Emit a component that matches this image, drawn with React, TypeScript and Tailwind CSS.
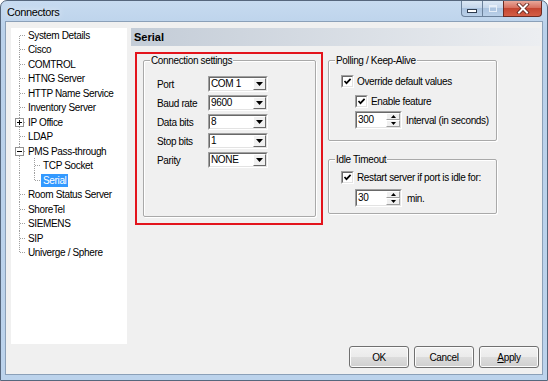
import React from "react";

type TreeItem = {
  label: string;
  level: 0 | 1;
  expander?: "+" | "-";
  selected?: boolean;
  lastChild?: boolean;
};

const items: TreeItem[] = [
  { label: "System Details", level: 0 },
  { label: "Cisco", level: 0 },
  { label: "COMTROL", level: 0 },
  { label: "HTNG Server", level: 0 },
  { label: "HTTP Name Service", level: 0 },
  { label: "Inventory Server", level: 0 },
  { label: "IP Office", level: 0, expander: "+" },
  { label: "LDAP", level: 0 },
  { label: "PMS Pass-through", level: 0, expander: "-" },
  { label: "TCP Socket", level: 1 },
  { label: "Serial", level: 1, selected: true, lastChild: true },
  { label: "Room Status Server", level: 0 },
  { label: "ShoreTel", level: 0 },
  { label: "SIEMENS", level: 0 },
  { label: "SIP", level: 0 },
  { label: "Univerge / Sphere", level: 0 },
];

const LINE = "#a0a0a0";

function TreeRow({ item, i, n }: { item: TreeItem; i: number; n: number }) {
  const hh = i % 2 === 0 ? 14 : 15;
  const cy = 7.5;
  const first = i === 0;
  const last = i === n - 1;
  const w = item.level === 0 ? 15 : 30;
  return (
    <div className={`flex items-center ${i % 2 === 0 ? "h-[14px]" : "h-[15px]"}`}>
      <svg width={w} height={hh} className="shrink-0" shapeRendering="crispEdges">
        <line x1={8.5} y1={first ? cy : 0} x2={8.5} y2={last ? cy : hh} stroke={LINE} strokeDasharray="1 1" />
        {item.level === 0 ? (
          <line x1={9} y1={cy} x2={15} y2={cy} stroke={LINE} strokeDasharray="1 1" />
        ) : (
          <>
            <line x1={23.5} y1={0} x2={23.5} y2={item.lastChild ? cy : hh} stroke={LINE} strokeDasharray="1 1" />
            <line x1={24} y1={cy} x2={30} y2={cy} stroke={LINE} strokeDasharray="1 1" />
          </>
        )}
        {item.expander && (
          <>
            <rect x={4.5} y={3.5} width={8} height={8} fill="#fff" stroke="#919191" />
            <line x1={6} y1={7.5} x2={11} y2={7.5} stroke="#000" />
            {item.expander === "+" && <line x1={8.5} y1={5} x2={8.5} y2={10} stroke="#000" />}
          </>
        )}
      </svg>
      <span
        className={`px-[2px] leading-[13px] whitespace-nowrap ${
          item.selected ? "bg-[#3399ff] text-white" : "text-black"
        }`}
      >
        {item.label}
      </span>
    </div>
  );
}

function Sunken({ className, children }: { className: string; children: React.ReactNode }) {
  return (
    <div
      className={`${className} flex border border-t-[#a0a0a0] border-l-[#a0a0a0] border-b-white border-r-white`}
    >
      <div className="flex-1 flex bg-white border border-t-[#696969] border-l-[#696969] border-b-[#e3e3e3] border-r-[#e3e3e3] min-w-0">
        {children}
      </div>
    </div>
  );
}

function Combo({ value }: { value: string }) {
  return (
    <Sunken className="w-[60px] h-[16px]">
      <span className="flex-1 pl-[1px] leading-[12px] text-black whitespace-nowrap">{value}</span>
      <div className="w-[13px] h-full flex items-center justify-center bg-[#f0f0f0] border border-t-white border-l-white border-b-[#696969] border-r-[#696969]">
        <svg width="7" height="4" viewBox="0 0 7 4">
          <path d="M0 0 H7 L3.5 4 Z" fill="#000" />
        </svg>
      </div>
    </Sunken>
  );
}

function Spin({ value }: { value: string }) {
  return (
    <Sunken className="w-[47px] h-[18px]">
      <span className="flex-1 pl-[1px] leading-[14px] text-black">{value}</span>
      <div className="w-[14px] h-full flex flex-col">
        <div className="flex-1 flex items-center justify-center bg-[#f0f0f0] border border-t-white border-l-white border-b-[#a0a0a0] border-r-[#a0a0a0]">
          <svg width="5" height="3" viewBox="0 0 5 3">
            <path d="M0 3 H5 L2.5 0 Z" fill="#000" />
          </svg>
        </div>
        <div className="flex-1 flex items-center justify-center bg-[#f0f0f0] border border-t-white border-l-white border-b-[#a0a0a0] border-r-[#a0a0a0]">
          <svg width="5" height="3" viewBox="0 0 5 3">
            <path d="M0 0 H5 L2.5 3 Z" fill="#000" />
          </svg>
        </div>
      </div>
    </Sunken>
  );
}

function Check({ label }: { label: string }) {
  return (
    <div className="flex items-center gap-[3px] h-[13px]">
      <Sunken className="w-[13px] h-[13px] shrink-0">
        <svg width="9" height="9" viewBox="0 0 9 9" className="block">
          <path d="M1.5 4 L3.5 6.2 L7.6 1.8" stroke="#000" strokeWidth="1.7" fill="none" />
        </svg>
      </Sunken>
      <span className="leading-[13px] whitespace-nowrap">{label}</span>
    </div>
  );
}

const fs =
  "border border-[#a9a9a9] rounded-[2px] shadow-[inset_1px_1px_0_#fff,1px_1px_0_#fff] min-w-0";
const lg = "ml-[6px] px-[1px] leading-[13px] bg-[#f0f0f0] whitespace-nowrap";

function WinButton({ children }: { children: React.ReactNode }) {
  return (
    <div className="w-[60px] h-[22px] flex items-center justify-center rounded-[3px] border border-[#707070] bg-[linear-gradient(#f2f2f2_0%,#ebebeb_50%,#dddddd_50%,#cfcfcf_100%)] shadow-[inset_0_0_0_1px_#fcfcfc] text-black">
      {children}
    </div>
  );
}

export default function App() {
  return (
    <div className="w-[548px] h-[381px] flex flex-col rounded-t-[7px] border border-[#56677d] bg-[linear-gradient(#c7dbf0,#bad1ea_30px,#bcd3ec)] text-[10px] tracking-[-0.35px] text-black [font-family:'Liberation_Sans',Arial,sans-serif] overflow-hidden">
      {/* Title bar */}
      <div className="h-[20px] flex items-start shrink-0">
        <div className="pl-[6px] pt-[4px] text-[11px] tracking-[-0.4px] leading-[14px] [text-shadow:0_0_6px_#ffffff]">
          Connectors
        </div>
        <div className="flex-1" />
        <div className="flex mr-[5px] h-[16px]">
          <div className="w-[22px] h-full flex items-center justify-center rounded-bl-[4px] border border-[#6b819b] border-t-0 bg-[linear-gradient(#dbe7f4,#c3d5ea_50%,#abc3df_50%,#bad0e8)]">
            <svg width="12" height="10" viewBox="0 0 12 10">
              <rect x="1.5" y="5.5" width="9" height="3" fill="#fff" stroke="#2e3b4e" />
            </svg>
          </div>
          <div className="w-[20px] h-full flex items-center justify-center border-y border-[#6b819b] border-t-0 bg-[linear-gradient(#dbe7f4,#c3d5ea_50%,#abc3df_50%,#bad0e8)]">
            <svg width="10" height="9" viewBox="0 0 10 9">
              <rect x="1.5" y="1.5" width="7" height="6" fill="none" stroke="#e6eef8" strokeWidth="1" />
              <rect x="1.5" y="1.5" width="7" height="1.5" fill="#e6eef8" />
            </svg>
          </div>
          <div className="w-[39px] h-full flex items-center justify-center rounded-br-[4px] border border-[#6d2b22] border-t-0 bg-[linear-gradient(#e9a89a,#d7705f_45%,#c44631_50%,#d45e46)]">
            <svg width="14" height="11" viewBox="0 0 14 11">
              <path d="M3 1.5 L11 9.5 M11 1.5 L3 9.5" stroke="#5a1f18" strokeWidth="3.6" strokeLinecap="square" />
              <path d="M3 1.5 L11 9.5 M11 1.5 L3 9.5" stroke="#fff" strokeWidth="2" strokeLinecap="square" />
            </svg>
          </div>
        </div>
      </div>

      {/* Client area */}
      <div className="flex-1 mx-[4px] mb-[5px] border border-[#8ba0b8] bg-[#f0f0f0] flex flex-col pt-[6px] pl-[5px] pr-[2px]">
        <div className="flex h-[316px]">
          {/* Tree */}
          <div className="w-[116px] h-full bg-white shrink-0 overflow-hidden">
            {items.map((it, i) => (
              <TreeRow key={it.label} item={it} i={i} n={items.length} />
            ))}
          </div>

          {/* Right panel */}
          <div className="flex-1 ml-[4px] flex flex-col">
            <div className="h-[18px] flex items-center pl-[3px] bg-[linear-gradient(to_right,#c3ccd7,#eceef1)] font-bold text-[11px] tracking-normal">
              Serial
            </div>
            <div className="flex mt-[6px] pl-[4px]">
              {/* Red highlighted box */}
              <div className="w-[188px] h-[173px] border-2 border-[#e3141c] pl-[6px] pr-[5px] pb-[6px] flex flex-col">
                <fieldset className={`${fs} flex-1`}>
                  <legend className={lg}>Connection settings</legend>
                  <div className="flex flex-col gap-[3px] mt-[9px] pl-[13px]">
                    {[
                      ["Port", "COM 1"],
                      ["Baud rate", "9600"],
                      ["Data bits", "8"],
                      ["Stop bits", "1"],
                      ["Parity", "NONE"],
                    ].map(([l, v]) => (
                      <div key={l} className="flex items-center h-[16px]">
                        <span className="w-[51px] whitespace-nowrap">{l}</span>
                        <Combo value={v} />
                      </div>
                    ))}
                  </div>
                </fieldset>
              </div>

              {/* Right groups */}
              <div className="w-[169px] ml-[5px] pt-[2px] flex flex-col">
                <fieldset className={`${fs} h-[87px]`}>
                  <legend className={lg}>Polling / Keep-Alive</legend>
                  <div className="pl-[12px] pt-[8px] flex flex-col">
                    <Check label="Override default values" />
                    <div className="pl-[14px] mt-[7px]">
                      <Check label="Enable feature" />
                    </div>
                    <div className="pl-[14px] mt-[3px] flex items-center gap-[4px]">
                      <Spin value="300" />
                      <span className="whitespace-nowrap">Interval (in seconds)</span>
                    </div>
                  </div>
                </fieldset>
                <fieldset className={`${fs} h-[61px] mt-[12px]`}>
                  <legend className={lg}>Idle Timeout</legend>
                  <div className="pl-[12px] pt-[5px] flex flex-col">
                    <Check label="Restart server if port is idle for:" />
                    <div className="pl-[14px] mt-[5px] flex items-center gap-[5px]">
                      <Spin value="30" />
                      <span>min.</span>
                    </div>
                  </div>
                </fieldset>
              </div>
            </div>
          </div>
        </div>

        {/* Buttons */}
        <div className="flex justify-end gap-[5px] mt-[2px] pr-[1px]">
          <WinButton>OK</WinButton>
          <WinButton>Cancel</WinButton>
          <WinButton>
            <span>
              <span className="underline">A</span>pply
            </span>
          </WinButton>
        </div>
      </div>
    </div>
  );
}
